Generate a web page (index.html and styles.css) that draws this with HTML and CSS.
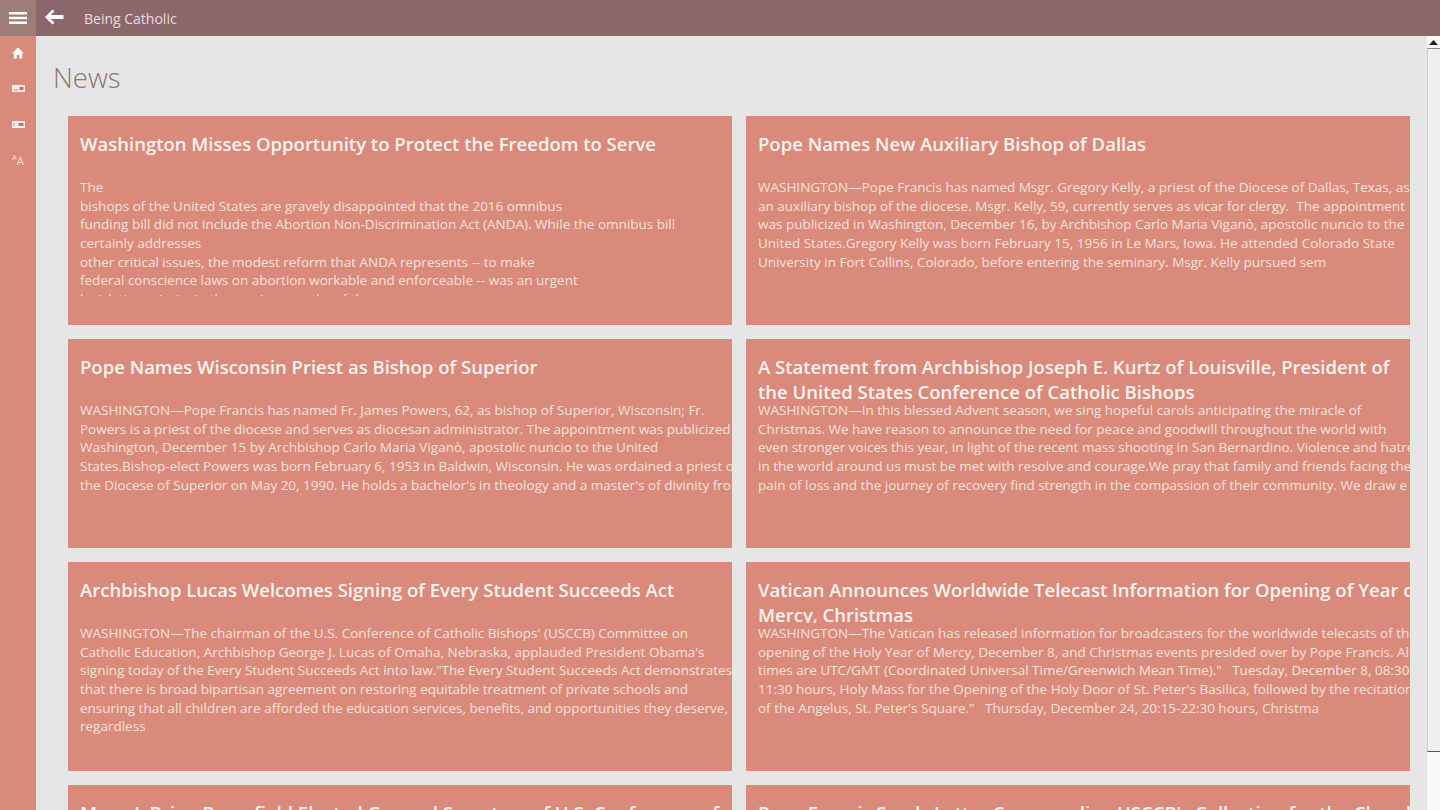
FILE: index.html
```html
<!DOCTYPE html>
<html lang="en">
<head>
  <meta charset="UTF-8">
  <meta name="viewport" content="width=device-width, initial-scale=1.0">
  <title>Being Catholic</title>
  <link rel="stylesheet" href="styles.css">
</head>
<body>
  <header class="topbar">
    <button class="menu-btn" aria-label="Menu">
      <svg width="18" height="12" viewBox="0 0 18 12"><path d="M0 0h18v2.500H0zM0 4.700h18v2.500H0zM0 9.400h18v2.500H0z" fill="#fff"/></svg>
    </button>
    <button class="back-btn" aria-label="Back">
      <svg width="20" height="16" viewBox="0 0 20 16"><path d="M8.500 0.500 1 8l7.500 7.500 2-1.800L6.800 10H19.500V6H6.800l3.700-3.700z" fill="#fff"/></svg>
    </button>
    <span class="app-title">Being Catholic</span>
  </header>

  <div class="layout">
    <nav class="sidebar">
      <a class="nav-item"><svg width="12" height="12" viewBox="0 0 12 12"><path d="M6 .5 0 6.200h1.800V11.500h3V8h2.400v3.500h3V6.200H12z" fill="#fff"/></svg></a>
      <a class="nav-item"><svg class="dim" width="13" height="7" viewBox="0 0 13 7"><path d="M0 0h13v7H0z" fill="#fff"/><path d="M7.500 2h4v3h-4z" fill="#b9776b"/><path d="M1.500 4.500h4.500v1H1.500z" fill="#d98a7b"/></svg></a>
      <a class="nav-item"><svg class="dim" width="13" height="7" viewBox="0 0 13 7"><path d="M0 0h13v7H0z" fill="#fff"/><path d="M6.500 2h5v3h-5z" fill="#b9776b"/><path d="M1.500 2h1v3h-1z" fill="#d98a7b"/></svg></a>
      <a class="nav-item lang">
        <span class="lang-small">A</span><span class="lang-big">A</span>
      </a>
    </nav>

    <main class="content">
      <h1>News</h1>
      <div class="cards">
        <article class="card">
          <h2>Washington Misses Opportunity to Protect the Freedom to Serve</h2>
          <p>The<br>bishops of the United States are gravely disappointed that the 2016 omnibus<br>funding bill did not include the Abortion Non-Discrimination Act (ANDA). While the omnibus bill<br>certainly addresses<br>other critical issues, the modest reform that ANDA represents -- to make<br>federal conscience laws on abortion workable and enforceable -- was an urgent<br>legislative priority in the waning months of the</p>
        </article>
        <article class="card">
          <h2>Pope Names New Auxiliary Bishop of Dallas</h2>
          <p>WASHINGTON—Pope Francis has named Msgr. Gregory Kelly, a priest of the Diocese of Dallas, Texas, as<br>an auxiliary bishop of the diocese. Msgr. Kelly, 59, currently serves as vicar for clergy.&nbsp; The appointment<br>was publicized in Washington, December 16, by Archbishop Carlo Maria Viganò, apostolic nuncio to the<br>United States.Gregory Kelly was born February 15, 1956 in Le Mars, Iowa. He attended Colorado State<br>University in Fort Collins, Colorado, before entering the seminary. Msgr. Kelly pursued sem</p>
        </article>
        <article class="card">
          <h2>Pope Names Wisconsin Priest as Bishop of Superior</h2>
          <p>WASHINGTON—Pope Francis has named Fr. James Powers, 62, as bishop of Superior, Wisconsin; Fr.<br>Powers is a priest of the diocese and serves as diocesan administrator. The appointment was publicized in<br>Washington, December 15 by Archbishop Carlo Maria Viganò, apostolic nuncio to the United<br>States.Bishop-elect Powers was born February 6, 1953 in Baldwin, Wisconsin. He was ordained a priest of<br>the Diocese of Superior on May 20, 1990. He holds a bachelor's in theology and a master's of divinity from</p>
        </article>
        <article class="card">
          <h2>A Statement from Archbishop Joseph E. Kurtz of Louisville, President of<br>the United States Conference of Catholic Bishops</h2>
          <p>WASHINGTON—In this blessed Advent season, we sing hopeful carols anticipating the miracle of<br>Christmas. We have reason to announce the need for peace and goodwill throughout the world with<br>even stronger voices this year, in light of the recent mass shooting in San Bernardino. Violence and hatred<br>in the world around us must be met with resolve and courage.We pray that family and friends facing the<br>pain of loss and the journey of recovery find strength in the compassion of their community. We draw e</p>
        </article>
        <article class="card">
          <h2>Archbishop Lucas Welcomes Signing of Every Student Succeeds Act</h2>
          <p>WASHINGTON—The chairman of the U.S. Conference of Catholic Bishops' (USCCB) Committee on<br>Catholic Education, Archbishop George J. Lucas of Omaha, Nebraska, applauded President Obama's<br>signing today of the Every Student Succeeds Act into law."The Every Student Succeeds Act demonstrates<br>that there is broad bipartisan agreement on restoring equitable treatment of private schools and<br>ensuring that all children are afforded the education services, benefits, and opportunities they deserve,<br>regardless</p>
        </article>
        <article class="card">
          <h2>Vatican Announces Worldwide Telecast Information for Opening of Year of<br>Mercy, Christmas</h2>
          <p>WASHINGTON—The Vatican has released information for broadcasters for the worldwide telecasts of the<br>opening of the Holy Year of Mercy, December 8, and Christmas events presided over by Pope Francis. All<br>times are UTC/GMT (Coordinated Universal Time/Greenwich Mean Time)."&nbsp;&nbsp; Tuesday, December 8, 08:30-<br>11:30 hours, Holy Mass for the Opening of the Holy Door of St. Peter's Basilica, followed by the recitation<br>of the Angelus, St. Peter's Square."&nbsp;&nbsp; Thursday, December 24, 20:15-22:30 hours, Christma</p>
        </article>
        <article class="card">
          <h2>Msgr. J. Brian Bransfield Elected General Secretary of U.S. Conference of</h2>
        </article>
        <article class="card">
          <h2>Pope Francis Sends Letter Commending USCCB's Collection for the Church</h2>
        </article>
      </div>
    </main>

    <div class="scrollbar">
      <div class="scroll-up"><svg width="9" height="5" viewBox="0 0 9 5"><path d="M4.500 0 9 5H0z" fill="#222"/></svg></div>
      <div class="scroll-thumb"></div>
    </div>
  </div>
</body>
</html>
```

FILE: styles.css
```css
* {
  margin: 0;
  padding: 0;
  box-sizing: border-box;
}

html, body {
  height: 100%;
  overflow: hidden;
}

body {
  font-family: "Open Sans", sans-serif;
  background-color: #e6e6e6;
  display: flex;
  flex-direction: column;
  color: #fff;
}

.topbar {
  height: 36px;
  flex: none;
  display: flex;
  align-items: center;
  background-color: #8a676b;
}

button {
  background: none;
  border: none;
  display: flex;
  align-items: center;
  justify-content: center;
}

.menu-btn {
  width: 36px;
  height: 36px;
  background-color: #9c7e77;
}

.back-btn {
  width: 20px;
  height: 16px;
  margin-left: 8px;
  margin-top: -3px;
}

.app-title {
  margin-left: 20px;
  font-size: 14px;
  color: #eadcdc;
}

.layout {
  flex: 1;
  display: flex;
  min-height: 0;
}

.sidebar {
  width: 36px;
  flex: none;
  background-color: #d98a7b;
  display: flex;
  flex-direction: column;
}

.nav-item {
  height: 36px;
  padding-bottom: 3px;
  display: flex;
  align-items: center;
  justify-content: center;
}

.dim {
  opacity: 0.85;
}

.lang {
  color: #f8e4df;
}

.lang-small {
  font-size: 7px;
  margin-bottom: 6px;
}

.lang-big {
  font-size: 11px;
}

.content {
  flex: 1;
  min-width: 0;
  overflow: hidden;
  padding: 22px 17px 0 17px;
}

h1 {
  font-size: 27.5px;
  font-weight: 300;
  line-height: 40px;
  color: #8a7775;
}

.cards {
  display: grid;
  grid-template-columns: 664px 664px;
  grid-auto-rows: 209px;
  gap: 14px;
  margin-top: 18px;
  margin-left: 15px;
}

.card {
  background-color: #d98a7b;
  padding: 15px 0 0 12px;
  overflow: hidden;
}

.card h2 {
  font-size: 18.5px;
  font-weight: 600;
  line-height: 25px;
  height: 46px;
  overflow: hidden;
  white-space: nowrap;
  color: #fdf3f0;
}

.card p {
  margin-top: 1px;
  font-size: 13.5px;
  line-height: 18.670px;
  height: 118px;
  overflow: hidden;
  white-space: nowrap;
  color: #f6e2dd;
}

.scrollbar {
  width: 13px;
  flex: none;
  background-color: #fafafa;
  display: flex;
  flex-direction: column;
}

.scroll-up {
  height: 12px;
  display: flex;
  align-items: center;
  justify-content: center;
}

.scroll-thumb {
  height: 704px;
  background-color: #efefef;
  border-bottom: 1px solid #555;
  border-top: 1px solid #8a8a8a;
  border-left: 1px solid #d0d0d0;
}
```
